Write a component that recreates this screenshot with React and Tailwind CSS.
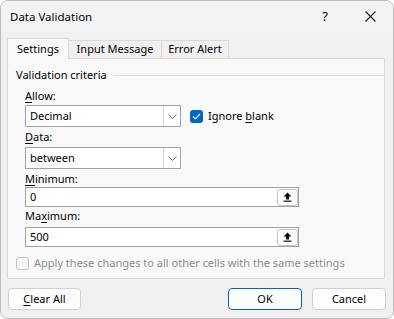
import React from "react";

const font = { fontFamily: '"Noto Sans", "Open Sans", sans-serif' };

function U({ children }) {
  return <span className="underline underline-offset-[2px] decoration-[1px]">{children}</span>;
}

function Chevron() {
  return (
    <svg width="9" height="5" viewBox="0 0 9 5" fill="none">
      <path d="M0.5 0.5 L4.5 4.5 L8.5 0.5" stroke="#6a6a6a" strokeWidth="1" />
    </svg>
  );
}

function Combo({ value }) {
  return (
    <div className="w-[156px] h-[22px] border border-[#a2a2a2] bg-white flex">
      <div className="flex-1 pl-[4px] flex items-center text-[11px] text-black">{value}</div>
      <div className="w-[17px] border-l border-[#d4d4d4] flex items-center justify-center">
        <Chevron />
      </div>
    </div>
  );
}

function RefInput({ value }) {
  return (
    <div className="w-[274px] h-[20px] border border-[#a2a2a2] bg-white flex items-center">
      <div className="flex-1 pl-[4px] text-[11px] text-black">{value}</div>
      <div className="w-[21px] h-[17px] rounded-[3px] border border-[#c6c6c6] bg-[#fdfdfd] flex items-center justify-center">
        <svg width="9" height="10" viewBox="0 0 9 10">
          <path d="M4.5 0.5 L8.5 4.5 L6 4.5 L6 7.5 L3 7.5 L3 4.5 L0.5 4.5 Z" fill="#111" />
          <rect x="0.5" y="8.6" width="8" height="1.2" fill="#111" />
        </svg>
      </div>
    </div>
  );
}

export default function App() {
  return (
    <div className="w-[394px] h-[319px] bg-white" style={font}>
      <div className="w-full h-full rounded-[8px] border border-[#bcbcbc] bg-[#f0f0f0] overflow-hidden flex flex-col">
        <div className="h-[31px] shrink-0 bg-[#f3f3f3] flex items-center pl-[9px] text-[11px] text-black">
          <span className="text-[11.5px]">Data Validation</span>
          <span className="ml-auto mr-[37px] text-[13px]">?</span>
          <svg className="mr-[17px]" width="11" height="11" viewBox="0 0 11 11">
            <path d="M0.5 0.5 L10.5 10.5 M10.5 0.5 L0.5 10.5" stroke="#1a1a1a" strokeWidth="1.1" />
          </svg>
        </div>
        <div className="flex items-end pl-[6px] mt-[6px] h-[20px] text-[11px] text-black">
          <div className="relative z-10 -mb-px h-[21px] w-[62px] border border-b-0 border-[#d9d9d9] bg-[#f9f9f9] flex items-center justify-center">
            Settings
          </div>
          <div className="h-[18px] w-[93px] border border-l-0 border-b-0 border-[#d9d9d9] bg-[#f0f0f0] flex items-center justify-center">
            Input Message
          </div>
          <div className="h-[18px] w-[67px] border border-l-0 border-b-0 border-[#d9d9d9] bg-[#f0f0f0] flex items-center justify-center">
            Error Alert
          </div>
        </div>
        <div className="ml-[6px] w-[378px] h-[221px] border border-[#d9d9d9] bg-[#f9f9f9] flex flex-col pl-[8px] pt-[8px] text-[11px] text-black">
          <div className="flex items-center h-[16px]">
            <span>Validation criteria</span>
            <div className="flex-1 h-px bg-[#dedede] ml-[6px]" />
          </div>
          <div className="pl-[9px] flex flex-col">
            <div className="mt-[5px] h-[16px] leading-[16px]"><U>A</U>llow:</div>
            <div className="mt-[1px] flex items-center">
              <Combo value="Decimal" />
              <div className="ml-[9px] w-[13px] h-[13px] rounded-[3px] bg-[#0067c0] flex items-center justify-center">
                <svg width="9" height="7" viewBox="0 0 9 7">
                  <path d="M1 3.5 L3.3 5.8 L8 1" stroke="#fff" strokeWidth="1.1" fill="none" />
                </svg>
              </div>
              <span className="ml-[5px]">Ignore <U>b</U>lank</span>
            </div>
            <div className="mt-[2px] h-[16px] leading-[16px]"><U>D</U>ata:</div>
            <div className="mt-[2px]">
              <Combo value="between" />
            </div>
            <div className="mt-[2px] h-[16px] leading-[16px]"><U>M</U>inimum:</div>
            <div>
              <RefInput value="0" />
            </div>
            <div className="mt-[1px] h-[16px] leading-[16px]">Ma<U>x</U>imum:</div>
            <div className="mt-[3px]">
              <RefInput value="500" />
            </div>
          </div>
          <div className="mt-[8px] flex items-center">
            <div className="w-[13px] h-[13px] rounded-[3px] border border-[#c6c6c6] bg-[#f6f6f6]" />
            <span className="ml-[5px] text-[#8c8c8c]">Apply these changes to all other cells with the same settings</span>
          </div>
        </div>
        <div className="flex items-center pl-[7px] pr-[7px] mt-[9px] text-[11px] text-black">
          <div className="w-[73px] h-[22px] rounded-[4px] border border-[#d0d0d0] bg-[#fdfdfd] flex items-center justify-center">
            <span><U>C</U>lear All</span>
          </div>
          <div className="ml-auto w-[74px] h-[22px] rounded-[4px] border border-[#0067c0] bg-[#fdfdfd] flex items-center justify-center">
            OK
          </div>
          <div className="ml-[10px] w-[74px] h-[22px] rounded-[4px] border border-[#d0d0d0] bg-[#fdfdfd] flex items-center justify-center">
            Cancel
          </div>
        </div>
      </div>
    </div>
  );
}
